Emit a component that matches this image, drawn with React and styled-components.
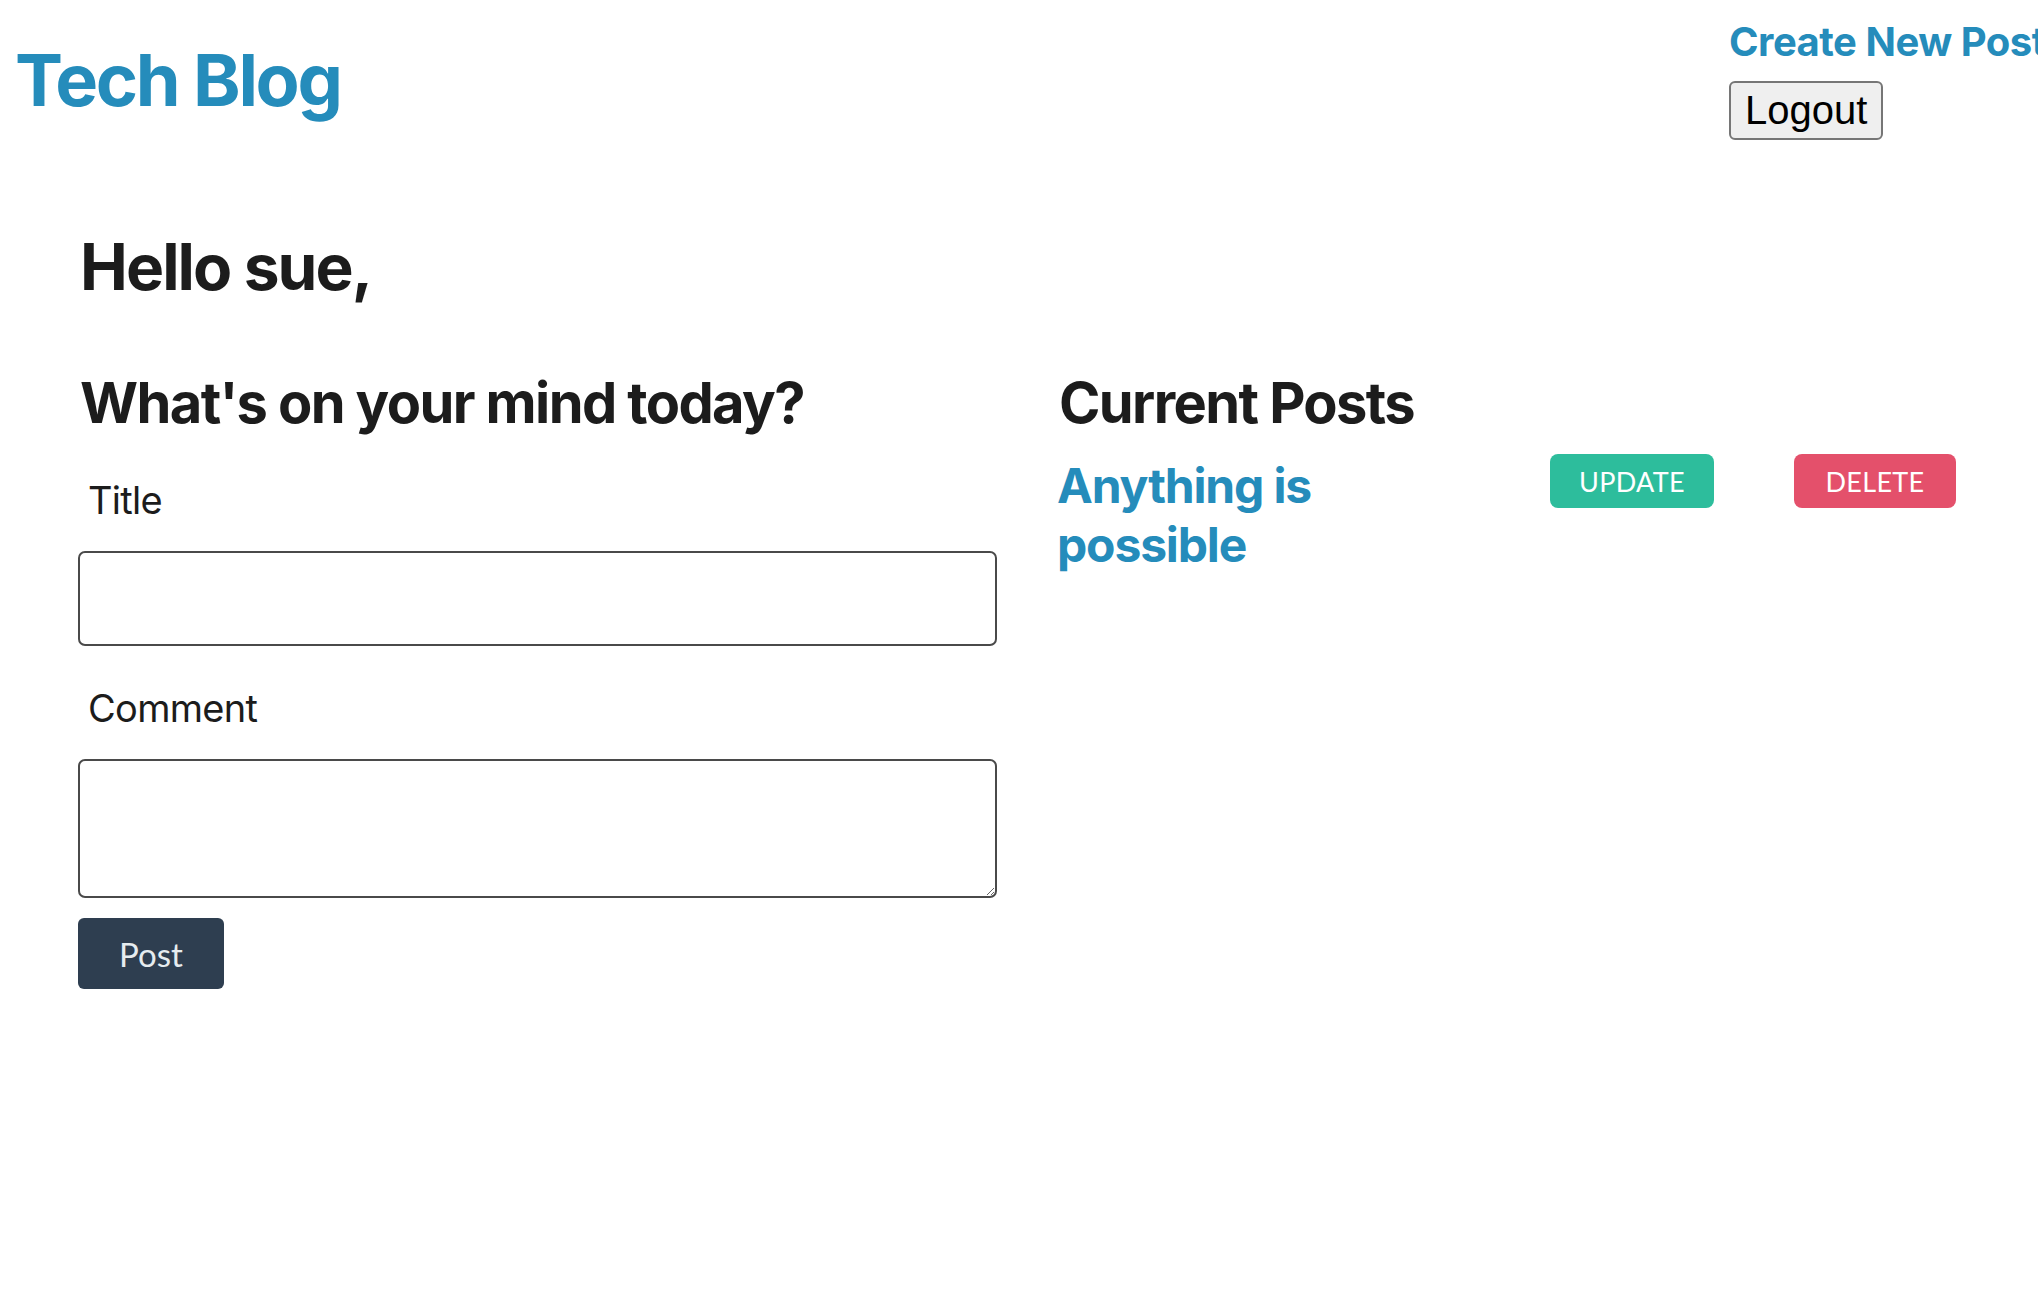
import React from "react";
import styled, { createGlobalStyle } from "styled-components";

const GlobalStyle = createGlobalStyle`
  html, body {
    margin: 0;
    padding: 0;
    background: #ffffff;
    overflow-x: hidden;
  }
  body {
    font-family: Inter, "Noto Sans", sans-serif;
    color: #1c1c1c;
  }
  * { box-sizing: border-box; }
`;

const BLUE = "#258cbb";

const Header = styled.header`
  display: flex;
  justify-content: space-between;
  align-items: flex-start;
  padding: 18px 0 0 15px;
  overflow: hidden;
`;

const Logo = styled.h1`
  margin: 19px 0 0;
  font: 700 72px/86px Inter, sans-serif;
  letter-spacing: -2.3px;
  color: ${BLUE};
`;

const Nav = styled.nav`
  flex: 0 0 309px;
  min-width: 0;
  display: flex;
  flex-direction: column;
  align-items: flex-start;
  gap: 15px;
`;

const NavLink = styled.a`
  font: 700 40px/48px Inter, sans-serif;
  letter-spacing: -0.5px;
  color: ${BLUE};
  text-decoration: none;
  white-space: nowrap;
`;

const LogoutButton = styled.button`
  font: 400 40px "Liberation Sans", Arial, sans-serif;
  color: #000;
  background: #efefef;
  border: 2px solid #767676;
  border-radius: 6px;
  padding: 5px 14px;
  cursor: pointer;
`;

const Main = styled.main`
  padding: 88px 0 0 78px;
`;

const Greeting = styled.h2`
  margin: 0 0 65px 2px;
  font: 700 64px/77px Inter, sans-serif;
  letter-spacing: -1.9px;
  color: #1c1c1c;
`;

const Columns = styled.div`
  display: grid;
  grid-template-columns: 919px 1fr;
  column-gap: 60px;
  align-items: start;
`;

const Column = styled.section`
  display: flex;
  flex-direction: column;
  align-items: stretch;
`;

const SectionTitle = styled.h3`
  margin: 0 0 0 2px;
  font: 700 56px/67px Inter, sans-serif;
  letter-spacing: -1.6px;
  color: #1c1c1c;
`;

const Label = styled.label`
  display: block;
  padding: ${(p) => p.$top}px 0 0 10px;
  margin-bottom: 28px;
  font: 400 38px/46px Inter, sans-serif;
  letter-spacing: -0.7px;
  color: #1c1c1c;
`;

const TextInput = styled.input`
  display: block;
  width: 100%;
  height: 95px;
  border: 2px solid #4a4a4a;
  border-radius: 7px;
  padding: 4px 12px;
  font: 400 32px Inter, sans-serif;
  outline: none;
`;

const TextArea = styled.textarea`
  display: block;
  width: 100%;
  height: 139px;
  border: 2px solid #4a4a4a;
  border-radius: 7px;
  padding: 4px 12px;
  font: 400 32px Inter, sans-serif;
  outline: none;
`;

const PostButton = styled.button`
  align-self: flex-start;
  margin-top: 20px;
  width: 146px;
  height: 71px;
  border: none;
  border-radius: 6px;
  background: #2e3e50;
  color: #e6ecef;
  font: 400 33px Lato, Inter, sans-serif;
  cursor: pointer;
`;

const PostRow = styled.div`
  display: grid;
  grid-template-columns: 493px 244px 244px;
  align-items: start;
  margin-top: 17px;
`;

const PostTitle = styled.a`
  display: block;
  max-width: 330px;
  margin: 2px 0 0 0;
  font: 700 48px/59px Inter, sans-serif;
  letter-spacing: -1.15px;
  color: ${BLUE};
  text-decoration: none;
`;

const ActionButton = styled.button`
  width: ${(p) => p.$w}px;
  height: 54px;
  border: none;
  border-radius: 8px;
  background: ${(p) => p.$bg};
  color: #ffffff;
  font: 400 27px Lato, Inter, sans-serif;
  letter-spacing: 0.3px;
  text-transform: uppercase;
  cursor: pointer;
`;

export default function App() {
  return (
    <>
      <GlobalStyle />
      <Header>
        <Logo>Tech Blog</Logo>
        <Nav>
          <NavLink href="#">Create New Post</NavLink>
          <LogoutButton>Logout</LogoutButton>
        </Nav>
      </Header>
      <Main>
        <Greeting>Hello sue,</Greeting>
        <Columns>
          <Column>
            <SectionTitle>What's on your mind today?</SectionTitle>
            <Label htmlFor="title" $top={40}>Title</Label>
            <TextInput id="title" type="text" />
            <Label htmlFor="comment" $top={39}>Comment</Label>
            <TextArea id="comment" />
            <PostButton>Post</PostButton>
          </Column>
          <Column>
            <SectionTitle>Current Posts</SectionTitle>
            <PostRow>
              <PostTitle href="#">Anything is possible</PostTitle>
              <ActionButton $w={164} $bg="#2dbd9c">Update</ActionButton>
              <ActionButton $w={162} $bg="#e4506b">Delete</ActionButton>
            </PostRow>
          </Column>
        </Columns>
      </Main>
    </>
  );
}
